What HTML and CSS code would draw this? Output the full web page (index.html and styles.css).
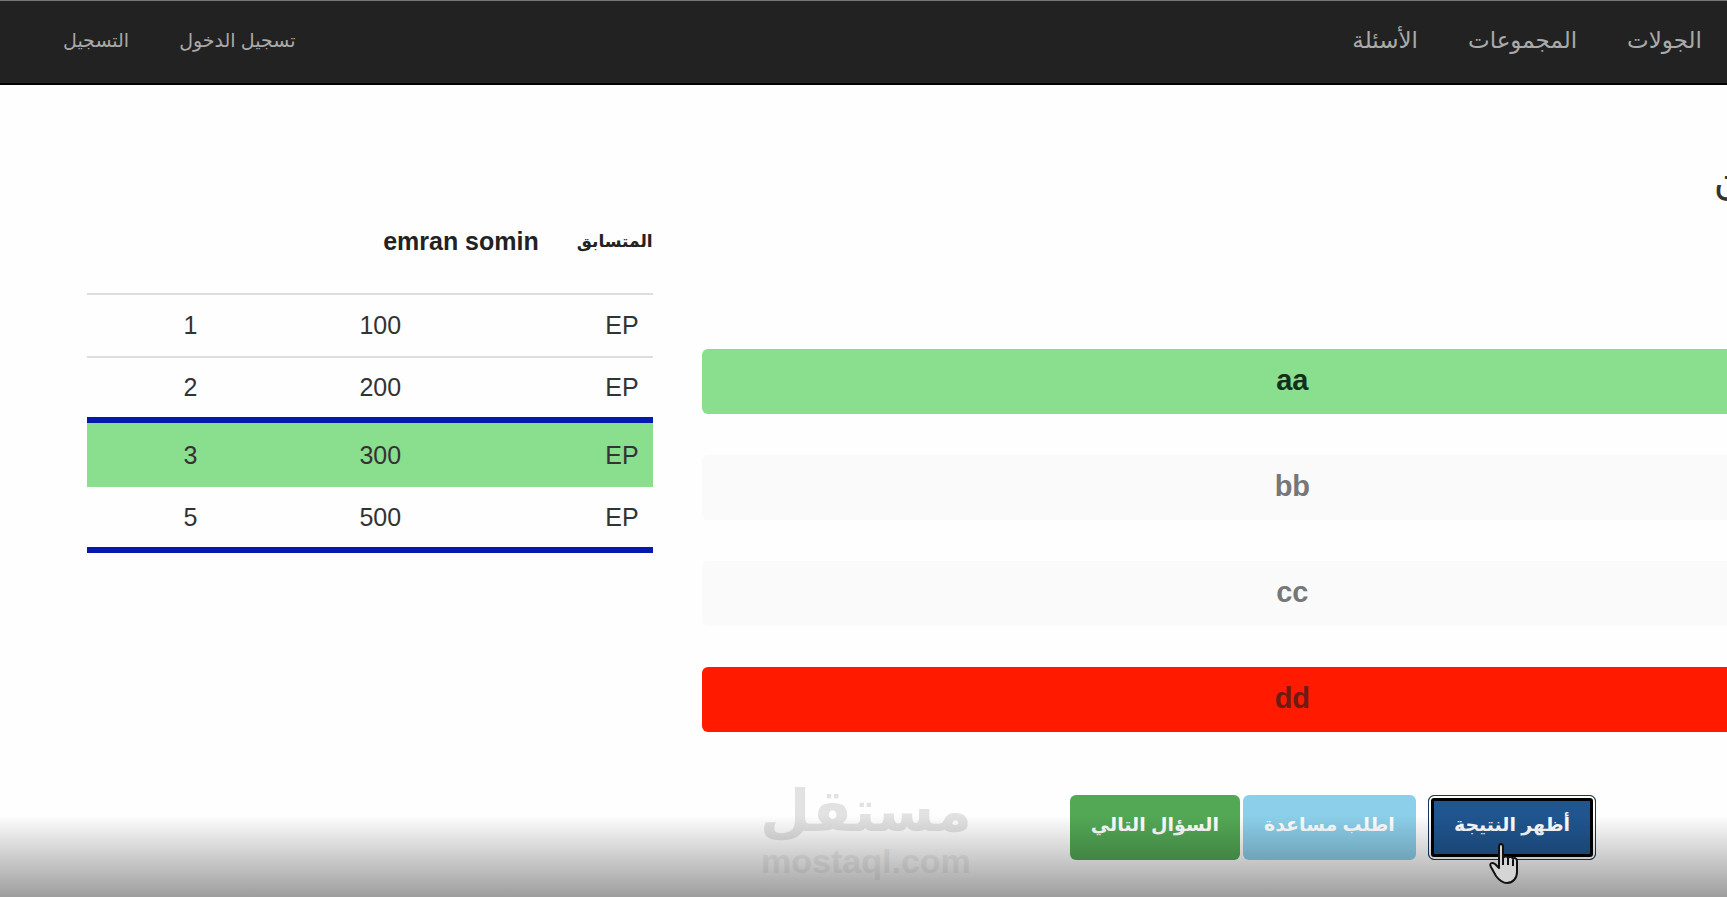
FILE: index.html
```html
<!DOCTYPE html>
<html lang="ar">
  <head>
    <meta charset="UTF-8" />
    <meta name="viewport" content="width=device-width, initial-scale=1.0" />
    <title>المسابقة</title>
    <link rel="stylesheet" href="styles.css">
  </head>
  <body>
    <nav class="navbar" dir="rtl">
      <div class="nav-links">
        <a href="#">الجولات</a>
        <a href="#">المجموعات</a>
        <a href="#">الأسئلة</a>
      </div>
      <div class="nav-links user-links">
        <a href="#">تسجيل الدخول</a>
        <a href="#">التسجيل</a>
      </div>
    </nav>

    <main class="content">
      <section class="scores" dir="rtl">
        <div class="player">
          <span class="label">المتسابق</span>
          <span class="name">emran somin</span>
        </div>
        <table class="points">
          <tbody>
            <tr><td>EP</td><td>100</td><td>1</td></tr>
            <tr><td>EP</td><td>200</td><td>2</td></tr>
            <tr class="current"><td>EP</td><td>300</td><td>3</td></tr>
            <tr class="last"><td>EP</td><td>500</td><td>5</td></tr>
          </tbody>
        </table>
      </section>

      <section class="quiz" dir="rtl">
        <h1 class="question">ن</h1>
        <div class="answers">
          <button class="answer correct">aa</button>
          <button class="answer faded">bb</button>
          <button class="answer faded">cc</button>
          <button class="answer wrong">dd</button>
        </div>
        <div class="actions">
          <button class="btn btn-primary">أظهر النتيجة</button>
          <button class="btn btn-info">اطلب مساعدة</button>
          <button class="btn btn-success">السؤال التالي</button>
        </div>
      </section>
    </main>

    <div class="watermark">
      <span class="mark-ar" dir="rtl">مستقل</span>
      <span class="mark-en">mostaql.com</span>
    </div>
    <div class="shade"></div>
    <svg class="cursor" viewBox="0 0 30 42" width="30" height="42" aria-hidden="true">
      <path d="M10 25V4c0-4 4-4 4 0v11c1-2 5-2 5 0 1-2 5-1 5 1 1-2 4-1 4 2v11c0 6-4 11-10 11-5 0-8-3-11-7l-5-9c-2-4 1-5 4-3l4 4z" fill="#d5d5d5" stroke="#111" stroke-width="2" stroke-linejoin="round" />
      <path d="M14 14v8M19 15v7M24 17v6" stroke="#111" stroke-width="2" />
    </svg>
  </body>
</html>
```
FILE: styles.css
```css
* {
  box-sizing: border-box;
}

body {
  margin: 0;
  min-height: 100vh;
  position: relative;
  overflow: hidden;
  background-color: #fefefe;
  color: #333;
  font-family: "Liberation Sans", "DejaVu Sans", sans-serif;
  font-size: 25px;
}

.navbar {
  display: flex;
  justify-content: space-between;
  align-items: center;
  height: 85px;
  padding: 0 25px 4px 63px;
  background-color: #222;
  border-top: 1px solid #777;
  border-bottom: 2px solid #000;
}

.nav-links {
  display: flex;
  gap: 50px;
}

.nav-links a {
  color: #aaa;
  font-size: 23px;
  text-decoration: none;
}

.user-links a {
  font-size: 19px;
}

/* the quiz column runs past the right edge of the window */
.content {
  display: grid;
  grid-template-columns: 565fr 1180fr;
  gap: 49px;
  width: 104%;
  margin-left: 87px;
}

.player {
  display: flex;
  align-items: center;
  gap: 38px;
  height: 208px;
  padding-top: 104px;
  font-weight: bold;
  color: #222;
}

.player .label {
  font-size: 17px;
}

.points {
  width: 100%;
  table-layout: fixed;
  border-collapse: collapse;
}

.points td {
  height: 63px;
  padding: 0 14px;
  border-top: 2px solid #ddd;
  text-align: right;
}

.points td:nth-child(1) {
  width: 42%;
}

.points td:nth-child(2) {
  width: 36%;
}

.points .current td {
  height: 67px;
  background-color: #89df8e;
  border-top: 6px solid #0718b0;
}

.points .last td {
  border-top: none;
  border-bottom: 6px solid #0718b0;
}

.question {
  margin: 0;
  padding: 72px 140px 0 0;
  height: 264px;
  font-size: 40px;
  font-weight: normal;
  line-height: 48px;
}

.answers {
  display: flex;
  flex-direction: column;
  gap: 41px;
}

.answer {
  height: 65px;
  border: none;
  border-radius: 6px;
  font-family: inherit;
  font-size: 29px;
  font-weight: bold;
  padding: 0 0 2px;
}

.correct {
  background-color: #89df8e;
  color: #12301a;
}

.faded {
  background-color: #fafafa;
  color: #777;
}

.wrong {
  background-color: #ff1a00;
  color: #6b1c14;
}

.actions {
  display: flex;
  gap: 3px;
  margin-top: 63px;
  padding-right: 287px;
}

.btn {
  height: 65px;
  padding: 0 21px 6px;
  border: none;
  border-radius: 6px;
  color: #fff;
  font-family: inherit;
  font-size: 19px;
  font-weight: bold;
}

/* focus ring: navy, white, black from the outside in */
.btn-primary {
  margin-left: 9px;
  padding: 0 25px 6px;
  background-color: #205590;
  border: 1px solid #16365c;
  box-shadow: inset 0 0 0 2px #fff, inset 0 0 0 5px #000;
}

.btn-info {
  background-color: #8ccfea;
}

.btn-success {
  background-color: #53a855;
}

.watermark {
  position: absolute;
  left: 44%;
  bottom: 20px;
  display: flex;
  flex-direction: column;
  align-items: center;
  color: #e2e2e2;
  font-weight: bold;
}

.mark-ar {
  font-size: 58px;
  line-height: 68px;
}

.mark-en {
  color: #efefef;
  font-size: 34px;
  line-height: 32px;
}

.shade {
  position: absolute;
  left: 0;
  right: 0;
  bottom: 0;
  height: 82px;
  background: linear-gradient(rgba(0, 0, 0, 0), rgba(0, 0, 0, 0.38));
  pointer-events: none;
}

.cursor {
  position: absolute;
  left: 1489px;
  top: 843px;
}
```
